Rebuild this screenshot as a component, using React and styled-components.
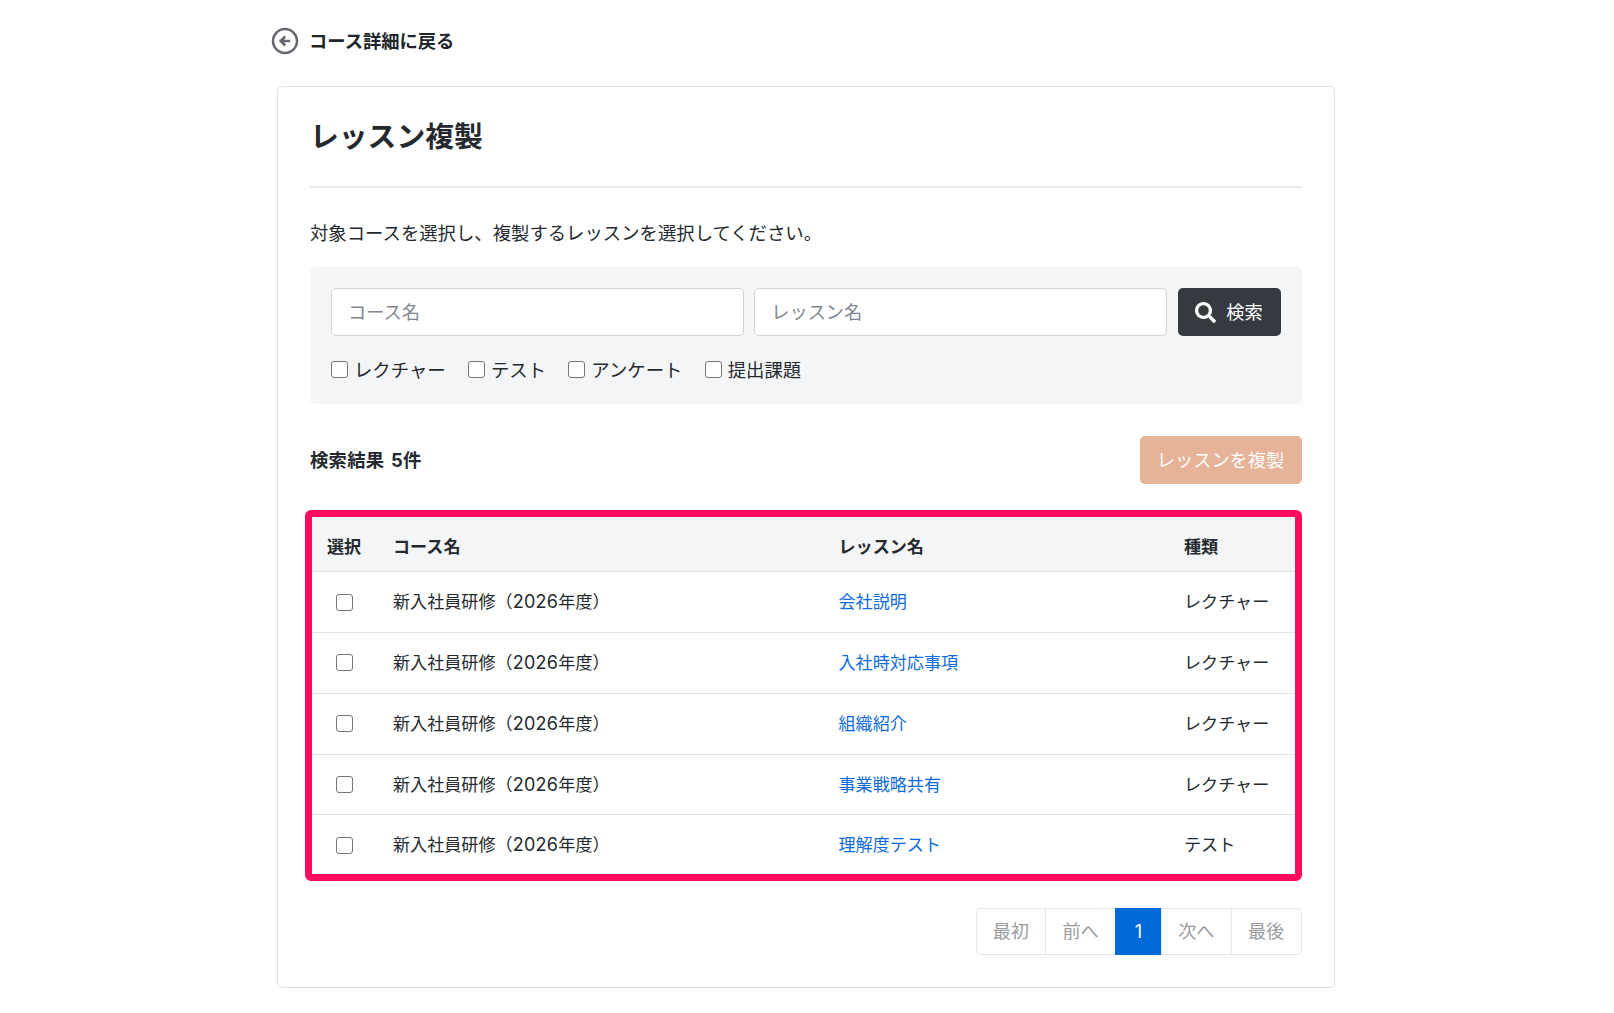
import React from "react";
import styled, { createGlobalStyle } from "styled-components";

const GlobalStyle = createGlobalStyle`
  *, *::before, *::after { box-sizing: border-box; }
  body {
    margin: 0;
    background: #fff;
    color: #24292e;
    font-family: Inter, "Noto Sans CJK JP", sans-serif;
    font-size: 18.38px;
    line-height: 1.5;
  }
`;

const Page = styled.main`
  width: 1057.5px;
  margin-left: 277px;
`;

const BackLink = styled.a`
  display: flex;
  align-items: center;
  gap: 10px;
  height: 86px;
  margin-left: -6px;
  padding-bottom: 4px;
  color: #212529;
  font-size: 18.3px;
  font-weight: 700;
  text-decoration: none;

  svg { display: block; }
  span { padding-top: 2px; }
`;

const Card = styled.section`
  height: 902px;
  padding: 0 32px;
  border: 1px solid #dfe2e6;
  border-radius: 5px;
`;

const Title = styled.h1`
  display: flex;
  align-items: center;
  height: 101px;
  margin: 0;
  border-bottom: 2px solid #e9ecef;
  font-size: 28.8px;
  font-weight: 700;
`;

const Lead = styled.p`
  display: flex;
  align-items: center;
  height: 79px;
  margin: 0;
  padding-top: 12px;
`;

const SearchPanel = styled.form`
  height: 137px;
  padding: 21px;
  border-radius: 5px;
  background: #f4f5f7;
`;

const SearchFields = styled.div`
  display: flex;
  gap: 10.5px;
`;

const TextField = styled.input`
  flex: 1;
  min-width: 0;
  height: 48px;
  padding: 0 16px;
  border: 1px solid #ced4da;
  border-radius: 5px;
  background: #fff;
  font: inherit;
  font-size: 18.2px;

  &::placeholder { color: #7f868d; opacity: 1; }
`;

const Button = styled.button`
  display: flex;
  align-items: center;
  justify-content: center;
  gap: 10px;
  width: ${(p) => p.$width}px;
  height: 48px;
  padding: 0;
  border: 0;
  border-radius: 5px;
  background: ${(p) => p.$color};
  color: #fff;
  font: inherit;
  font-size: 18.2px;

  span { padding-top: 2px; }
`;

const Options = styled.div`
  display: flex;
  align-items: center;
  gap: 22.3px;
  height: 31px;
  margin-top: 18px;
`;

const Option = styled.label`
  display: flex;
  align-items: center;
  gap: 6px;

  span { padding-top: 2px; }
`;

const Checkbox = styled.input.attrs({ type: "checkbox" })`
  appearance: none;
  flex: none;
  width: 17px;
  height: 17px;
  margin: 0;
  border: 1px solid #767676;
  border-radius: 3px;
  background: #fff;
`;

const ResultBar = styled.div`
  display: flex;
  align-items: center;
  justify-content: space-between;
  margin: 32px 0 26px;
`;

const ResultCount = styled.strong`
  padding-top: 2px;
  font-weight: 700;
  letter-spacing: 0.25px;
  word-spacing: 2px;
`;

const TableFrame = styled.div`
  height: 371px;
  margin: 0 -0.5px 0 -5px;
  border: 7px solid #ff0c5c;
  border-radius: 6px;
  font-size: 17.1px;
`;

const Row = styled.div`
  display: grid;
  grid-template-columns: 81px 445.5px 345.5px 1fr;
  align-items: center;
  height: ${(p) => (p.$head ? 55.3 : 60.75)}px;
  padding-top: ${(p) => (p.$head ? 5 : 0)}px;
  border-bottom: 1px solid #dee2e6;
  background: ${(p) => (p.$head ? "#f4f5f7" : "#fff")};
  font-weight: ${(p) => (p.$head ? 700 : 400)};

  &:last-child {
    height: 58px;
    padding-top: 2px;
    border-bottom: 0;
  }
`;

const SelectCell = styled.span`
  display: flex;
  justify-content: center;
  width: 64px;
`;

const Year = styled.span`
  font-size: 18px;
  letter-spacing: 0.3px;
  line-height: 1;
`;

const LessonLink = styled.a`
  color: #0f6bdb;
  text-decoration: none;
`;

const Pagination = styled.nav`
  display: flex;
  justify-content: flex-end;
  margin-top: 27px;
  font-size: 18.2px;
`;

const PageItem = styled.span`
  display: flex;
  align-items: center;
  justify-content: center;
  width: ${(p) => (p.$active ? 47 : 70.75)}px;
  height: 47px;
  margin-left: -1px;
  border: 1px solid ${(p) => (p.$active ? "#0069d9" : "#e2e6ea")};
  background: ${(p) => (p.$active ? "#0069d9" : "#fff")};
  color: ${(p) => (p.$active ? "#fff" : "#9a9c9e")};

  &:first-child { border-radius: 5px 0 0 5px; }
  &:last-child { border-radius: 0 5px 5px 0; }
`;

const BackIcon = () => (
  <svg width="28" height="28" viewBox="0 0 28 28" fill="none" stroke="#65686e">
    <circle cx="14" cy="14" r="12" strokeWidth="2.5" />
    <path d="M19.2 14H10.4M14.2 9.5L9.7 14l4.500 4.500" strokeWidth="2.6" />
  </svg>
);

const SearchIcon = () => (
  <svg width="21" height="21" viewBox="0 0 512 512" fill="currentColor">
    <path d="M505 442.700L405.300 343c-4.500-4.500-10.600-7-17-7H372c27.600-35.300 44-79.700 44-128C416 93.100 322.900 0 208 0S0 93.100 0 208s93.100 208 208 208c48.300 0 92.700-16.400 128-44v16.300c0 6.400 2.500 12.500 7 17l99.700 99.700c9.400 9.400 24.600 9.400 33.900 0l28.300-28.300c9.400-9.400 9.400-24.600.1-34zM208 336c-70.700 0-128-57.200-128-128 0-70.700 57.200-128 128-128 70.700 0 128 57.200 128 128 0 70.700-57.200 128-128 128z" />
  </svg>
);

const kinds = ["レクチャー", "テスト", "アンケート", "提出課題"];

const lessons = [
  { name: "会社説明", kind: "レクチャー" },
  { name: "入社時対応事項", kind: "レクチャー" },
  { name: "組織紹介", kind: "レクチャー" },
  { name: "事業戦略共有", kind: "レクチャー" },
  { name: "理解度テスト", kind: "テスト" },
];

const pages = ["最初", "前へ", "1", "次へ", "最後"];

export default function App() {
  return (
    <Page>
      <GlobalStyle />
      <BackLink>
        <BackIcon />
        <span>コース詳細に戻る</span>
      </BackLink>
      <Card>
        <Title>レッスン複製</Title>
        <Lead>対象コースを選択し、複製するレッスンを選択してください。</Lead>
        <SearchPanel>
          <SearchFields>
            <TextField placeholder="コース名" />
            <TextField placeholder="レッスン名" />
            <Button type="button" $width={103} $color="#343a40">
              <SearchIcon />
              <span>検索</span>
            </Button>
          </SearchFields>
          <Options>
            {kinds.map((kind) => (
              <Option key={kind}>
                <Checkbox />
                <span>{kind}</span>
              </Option>
            ))}
          </Options>
        </SearchPanel>
        <ResultBar>
          <ResultCount>検索結果 5件</ResultCount>
          <Button type="button" $width={162} $color="#e6b298">
            <span>レッスンを複製</span>
          </Button>
        </ResultBar>
        <TableFrame>
          <Row $head>
            <SelectCell>選択</SelectCell>
            <span>コース名</span>
            <span>レッスン名</span>
            <span>種類</span>
          </Row>
          {lessons.map((lesson) => (
            <Row key={lesson.name}>
              <SelectCell>
                <Checkbox />
              </SelectCell>
              <span>
                新入社員研修（<Year>2026</Year>年度）
              </span>
              <LessonLink>{lesson.name}</LessonLink>
              <span>{lesson.kind}</span>
            </Row>
          ))}
        </TableFrame>
        <Pagination>
          {pages.map((label) => (
            <PageItem key={label} $active={label === "1"}>
              {label}
            </PageItem>
          ))}
        </Pagination>
      </Card>
    </Page>
  );
}
